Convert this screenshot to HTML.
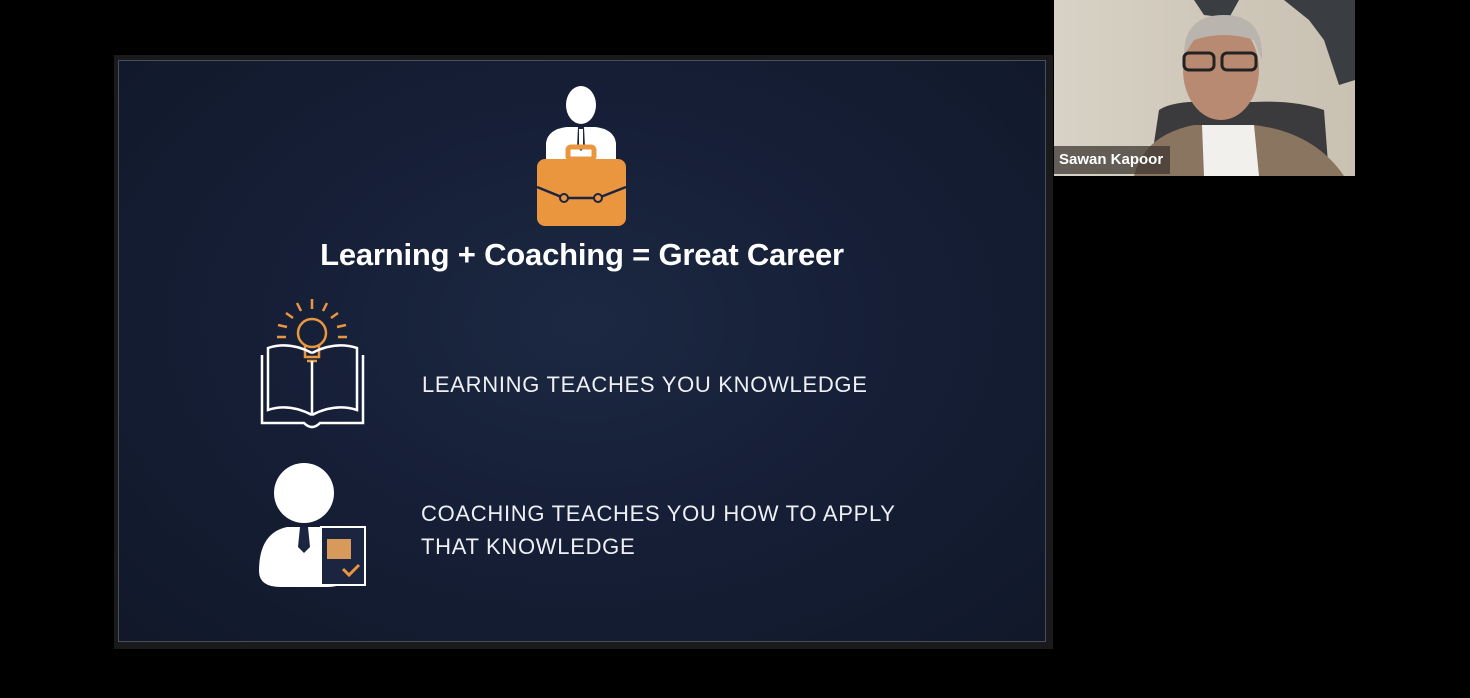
<!DOCTYPE html>
<html><head><style>
body{margin:0;width:1470px;height:698px;background:#000;position:relative;overflow:hidden;font-family:"Liberation Sans",sans-serif}
#outer{position:absolute;left:114px;top:55px;width:939px;height:594px;background:#1a1a1c}
#slide{position:absolute;left:118px;top:60px;width:926px;height:580px;border:1px solid #4a4e58;background:radial-gradient(ellipse at 50% 45%,#1c2842 0%,#161f37 45%,#101829 100%)}
.t{position:absolute;color:#eef0f4;font-size:22px;letter-spacing:0.7px}
#title{position:absolute;left:0;width:926px;top:176px;text-align:center;color:#fff;font-weight:bold;font-size:31px;font-family:"Liberation Sans",sans-serif;letter-spacing:-0.2px}
#vid{position:absolute;left:1054px;top:0;width:301px;height:176px;background:linear-gradient(90deg,#d8d2c6,#cfc8ba 50%,#c9c1b2)}
#name{position:absolute;left:1054px;top:146px;width:116px;height:28px;background:rgba(60,55,50,.75);color:#fff;font-weight:bold;font-size:15px;line-height:28px;padding-left:5px;box-sizing:border-box}
</style></head><body>
<div id="outer"></div>
<div id="slide">
<svg style="position:absolute;left:415px;top:24px" width="95" height="144" viewBox="0 0 95 144">
<ellipse cx="47" cy="20" rx="15" ry="19" fill="#fff"/>
<path d="M12 78 L12 58 Q14 44 33 42 L61 42 Q80 44 82 58 L82 78 Z" fill="#fff"/>
<path d="M44 42 L50 42 L51 62 L47 66 L43 62 Z" fill="#1b2540"/>
<path d="M45 44 L49 44 L49 60 L47 62 L45 60 Z" fill="#fff"/>
<rect x="34" y="62" width="26" height="12" rx="3" fill="none" stroke="#e9963f" stroke-width="5"/>
<rect x="3" y="74" width="89" height="67" rx="8" fill="#e9963f"/>
<path d="M3 102 L30 113 L64 113 L92 102" stroke="#1b2540" stroke-width="2.5" fill="none"/>
<circle cx="30" cy="113" r="4" fill="#e9963f" stroke="#1b2540" stroke-width="2"/>
<circle cx="64" cy="113" r="4" fill="#e9963f" stroke="#1b2540" stroke-width="2"/>
</svg>
<div id="title">Learning + Coaching = Great Career</div>
<svg style="position:absolute;left:140px;top:234px" width="110" height="134" viewBox="0 0 110 134">
<g stroke="#e9963f" stroke-width="2.5" fill="none">
<circle cx="53" cy="38" r="14"/><path d="M46 50 L46 62 L60 62 L60 50 M48 66 L58 66"/>
<path d="M53 4 V14 M38 8 L42 16 M68 8 L64 16 M27 18 L34 23 M79 18 L72 23 M19 30 L28 32 M87 30 L78 32 M18 42 H27 M88 42 H79"/>
</g>
<g stroke="#fff" stroke-width="2.5" fill="none">
<path d="M53 66 V120 M53 120 Q30 108 9 115 V53 Q30 46 53 58 M53 58 Q76 46 98 53 V115 Q76 108 53 120"/>
<path d="M3 60 V128 H45 Q53 136 61 128 H104 V60"/>
</g>
</svg>
<div class="t" style="left:303px;top:311px">LEARNING TEACHES YOU KNOWLEDGE</div>
<svg style="position:absolute;left:138px;top:400px" width="112" height="130" viewBox="0 0 112 130">
<circle cx="47" cy="32" r="30" fill="#fff"/>
<path d="M2 110 Q2 72 30 66 L64 66 Q92 72 92 110 Q92 126 70 126 L24 126 Q2 126 2 110Z" fill="#fff"/>
<path d="M43 66 L51 66 L53 86 L47 92 L41 86Z" fill="#1b2540"/>
<rect x="64" y="66" width="44" height="58" fill="#1b2540" stroke="#fff" stroke-width="2"/>
<rect x="70" y="78" width="24" height="20" fill="#d89a5a"/>
<path d="M86 108 L92 114 L102 104" stroke="#e9963f" stroke-width="3" fill="none"/>
</svg>
<div class="t" style="left:302px;top:436px;line-height:33px">COACHING TEACHES YOU HOW TO APPLY<br>THAT KNOWLEDGE</div>
</div>
<div id="vid">
<svg width="301" height="176" viewBox="0 0 301 176" style="position:absolute;left:0;top:0">
<path d="M140 0 L185 0 L175 18 L150 15Z M230 0 L301 0 L301 80 L285 85 L270 40 L255 20Z" fill="#3a3d42"/>
<path d="M105 110 Q120 100 160 102 L200 102 Q240 100 270 110 L275 176 L95 176Z" fill="#3b3b3d"/>
<path d="M80 176 Q90 135 140 125 L200 125 Q260 132 290 176Z" fill="#8a7560"/>
<path d="M148 125 L200 125 L205 176 L150 176Z" fill="#f2f0ec"/>
<ellipse cx="167" cy="70" rx="38" ry="50" fill="#b98a72"/>
<path d="M130 55 Q130 15 170 15 Q210 15 208 60 L200 40 Q170 30 140 40Z" fill="#b9b4ae"/>
<rect x="130" y="53" width="30" height="17" rx="5" fill="none" stroke="#222" stroke-width="3"/>
<rect x="168" y="53" width="34" height="17" rx="5" fill="none" stroke="#222" stroke-width="3"/>
</svg>
</div>
<div id="name">Sawan Kapoor</div>
</body></html>
